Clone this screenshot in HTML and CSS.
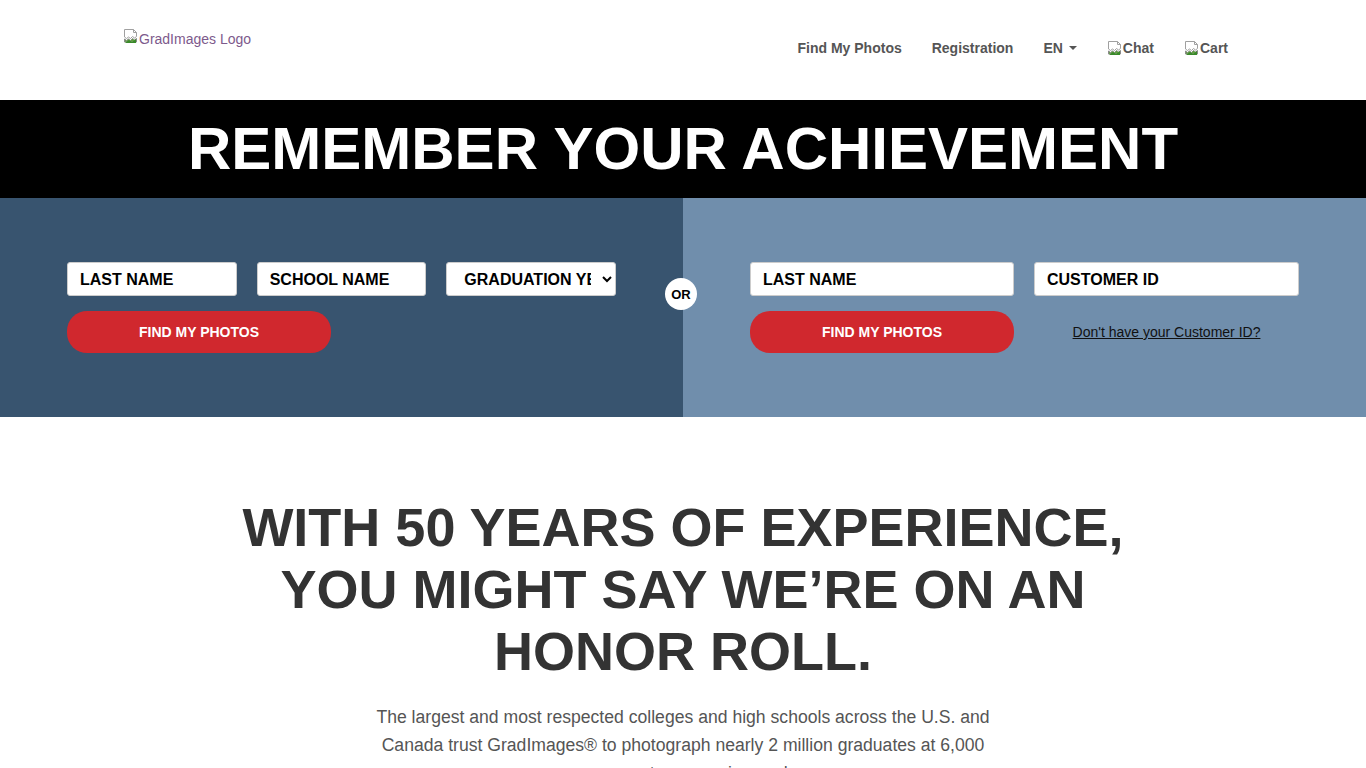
FILE: index.html
```html
<!DOCTYPE html>
<html lang="en">
<head>
<meta charset="utf-8">
<title>GradImages</title>
<link rel="stylesheet" href="styles.css">
</head>
<body>
<header class="navbar">
  <a class="logo" href="#"><svg class="broken" viewBox="0 0 16 16" width="16" height="16"><path d="M1.5 1.5h9l3 3v4l-2 1.5-2-1.5-2 2-2-1.5-2 1.5-2-1.5z" fill="#fff" stroke="#a0a0a0"/><path d="M10.5 1.5v3h3" fill="none" stroke="#a0a0a0"/><path d="M1.5 11l2 1.5 2-1.5 2 1.5 2-2 2 1.5 2-1.5v3.5h-12z" fill="#5ea43c" stroke="#8a8a8a"/><path d="M2 15l4-3 3 2 4-3v4z" fill="#3a8a2a"/></svg><span class="logo-text">GradImages Logo</span></a>
  <nav class="nav">
    <a href="#">Find My Photos</a>
    <a href="#">Registration</a>
    <a href="#" class="lang">EN <span class="caret"></span></a>
    <a href="#" class="imglink"><svg class="broken" viewBox="0 0 16 16" width="16" height="16"><path d="M1.5 1.5h9l3 3v4l-2 1.5-2-1.5-2 2-2-1.5-2 1.5-2-1.5z" fill="#fff" stroke="#a0a0a0"/><path d="M10.5 1.5v3h3" fill="none" stroke="#a0a0a0"/><path d="M1.5 11l2 1.5 2-1.5 2 1.5 2-2 2 1.5 2-1.5v3.5h-12z" fill="#5ea43c" stroke="#8a8a8a"/><path d="M2 15l4-3 3 2 4-3v4z" fill="#3a8a2a"/></svg>Chat</a>
    <a href="#" class="imglink"><svg class="broken" viewBox="0 0 16 16" width="16" height="16"><path d="M1.5 1.5h9l3 3v4l-2 1.5-2-1.5-2 2-2-1.5-2 1.5-2-1.5z" fill="#fff" stroke="#a0a0a0"/><path d="M10.5 1.5v3h3" fill="none" stroke="#a0a0a0"/><path d="M1.5 11l2 1.5 2-1.5 2 1.5 2-2 2 1.5 2-1.5v3.5h-12z" fill="#5ea43c" stroke="#8a8a8a"/><path d="M2 15l4-3 3 2 4-3v4z" fill="#3a8a2a"/></svg>Cart</a>
  </nav>
</header>

<section class="banner">
  <h1>REMEMBER YOUR ACHIEVEMENT</h1>
</section>

<section class="search">
  <form class="panel panel-left">
    <div class="row3">
      <input type="text" placeholder="LAST NAME">
      <input type="text" placeholder="SCHOOL NAME">
      <select><option>GRADUATION YEAR</option></select>
    </div>
    <button type="button" class="btn">FIND MY PHOTOS</button>
  </form>
  <div class="or">OR</div>
  <form class="panel panel-right">
    <div class="row2">
      <input type="text" placeholder="LAST NAME">
      <input type="text" placeholder="CUSTOMER ID">
      <button type="button" class="btn">FIND MY PHOTOS</button>
      <a href="#" class="help">Don't have your Customer ID?</a>
    </div>
  </form>
</section>

<section class="intro">
  <h2>WITH 50 YEARS OF EXPERIENCE, YOU MIGHT SAY WE’RE ON AN HONOR ROLL.</h2>
  <p>The largest and most respected colleges and high schools across the U.S. and Canada trust GradImages® to photograph nearly 2 million graduates at 6,000 commencement ceremonies each year.</p>
</section>
</body>
</html>
```

FILE: styles.css
```css
* { box-sizing: border-box; }
html, body { margin: 0; padding: 0; }
body {
  font-family: "Liberation Sans", Arial, sans-serif;
  background: #fff;
  color: #333;
}
a { text-decoration: none; }

.navbar {
  height: 100px;
  display: flex;
  justify-content: space-between;
  align-items: flex-start;
  padding: 0 123px 0 123px;
}
.logo {
  margin-top: 28px;
  display: flex;
  align-items: flex-start;
  font-size: 14px;
  color: #7d5a8c;
}
.logo-text { line-height: 22px; }
.broken { display: block; flex: none; }
.nav {
  display: flex;
  align-items: center;
  margin-top: 38px;
  margin-right: 15px;
}
.nav a {
  font-size: 14px;
  font-weight: bold;
  color: #555;
  line-height: 20px;
  padding: 0 15px;
  display: flex;
  align-items: center;
}
.nav a:last-child { padding-right: 0; }
.caret {
  display: inline-block;
  width: 0; height: 0;
  margin-left: 6px;
  border-top: 4px solid #555;
  border-left: 4px solid transparent;
  border-right: 4px solid transparent;
}

.banner {
  background: #000;
  height: 98px;
  display: flex;
  align-items: center;
  justify-content: center;
}
.banner h1 {
  margin: 0;
  color: #fff;
  font-size: 60px;
  font-weight: bold;
  line-height: 1;
}

.search {
  position: relative;
  display: flex;
  height: 219px;
}
.panel {
  flex: 1;
  padding: 64px 67px;
}
.panel-left { background: #38546f; }
.panel-right { background: #708eac; }
.row3 {
  display: grid;
  grid-template-columns: repeat(3, 1fr);
  column-gap: 20px;
}
.row2 {
  display: grid;
  grid-template-columns: 264px 265px;
  column-gap: 20px;
  row-gap: 15px;
  align-items: center;
}
input, select {
  height: 34px;
  border: 1px solid #ccc;
  border-radius: 3px;
  background: #fff;
  font-family: "Liberation Sans", Arial, sans-serif;
  font-size: 16px;
  font-weight: bold;
  color: #000;
  padding: 1px 12px 0;
  width: 100%;
  outline: none;
}
input::placeholder { color: #000; opacity: 1; }
select { padding: 1px 8px 0 13px; }
.btn {
  display: block;
  height: 42px;
  width: 264px;
  border: none;
  border-radius: 20px;
  background: #d0282e;
  color: #fff;
  font-family: "Liberation Sans", Arial, sans-serif;
  font-size: 14px;
  font-weight: bold;
  padding: 0;
}
.panel-left .btn { margin-top: 15px; }
.help {
  justify-self: center;
  color: #111;
  font-size: 14px;
  text-decoration: underline;
}
.or {
  position: absolute;
  left: 665px;
  top: 80px;
  width: 32px;
  height: 32px;
  border-radius: 50%;
  background: #fff;
  color: #000;
  font-size: 13px;
  font-weight: bold;
  display: flex;
  align-items: center;
  justify-content: center;
}

.intro {
  padding-top: 79px;
  display: flex;
  flex-direction: column;
  align-items: center;
  text-align: center;
}
.intro h2 {
  margin: 0;
  max-width: 900px;
  font-size: 54px;
  line-height: 62px;
  font-weight: bold;
  color: #333;
}
.intro p {
  margin: 21px 0 0;
  max-width: 630px;
  font-size: 17.6px;
  line-height: 28px;
  color: #555;
}
```
